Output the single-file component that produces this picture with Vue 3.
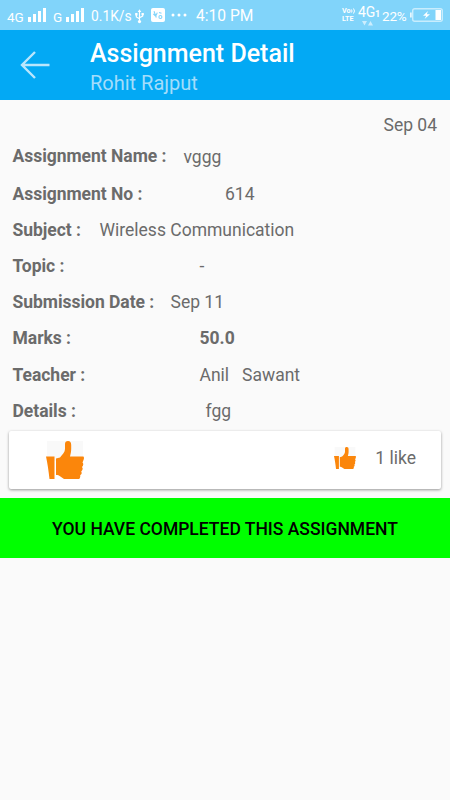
<script setup>
import { ref } from 'vue'

const date = 'Sep 04'

const rows = [
  { key: 'name', label: 'Assignment Name :', value: 'vggg' },
  { key: 'number', label: 'Assignment No :', value: '614' },
  { key: 'subject', label: 'Subject :', value: 'Wireless Communication' },
  { key: 'topic', label: 'Topic :', value: '-' },
  { key: 'due', label: 'Submission Date :', value: 'Sep 11' },
  { key: 'marks', label: 'Marks :', value: '50.0' },
  { key: 'teacher', label: 'Teacher :', value: 'Anil   Sawant' },
  { key: 'notes', label: 'Details :', value: 'fgg' },
]

const cuffPath = 'M0 15.5h8.5V38H3.5C2.6 30 1.5 22 0 15.5z'
const handPath =
  'M10 17.5l4-1c2.5-3 5-5.5 5-8.5V3C19 1 20 0 22 0c2.2 0 3.2 1.5 3.2 4v4c0 3-.7 5-1.2 7.5h13c1.200 0 1.200 2 .5 3.500L36.500 21.500c1.200 1 1 3-.5 4.500 1.200 1.500.8 3-.8 4.500 1 1.500.3 3-1 3.500.3 2-.2 4-1.400 4H18l-4-2.700c-1-.8-2-1.300-4-1.300z'

const likes = ref(1)
</script>

<template>
  <div class="screen">
    <div class="status-bar">
      <span class="network">4G</span>
      <svg class="signal" viewBox="0 0 19 14">
        <path d="M0 9h3v5H0zM5 6h3v8H5zM10 3h3v11h-3zM15 0h3v14h-3z" />
      </svg>
      <span class="network second">G</span>
      <svg class="signal" viewBox="0 0 19 14">
        <path d="M0 9h3v5H0zM5 6h3v8H5zM10 3h3v11h-3zM15 0h3v14h-3z" />
      </svg>
      <span class="speed">0.1K/s</span>
      <svg class="usb" viewBox="0 0 10 16">
        <path d="M5 2v11M1.5 5.5v3L5 10.5M8.5 5v2.5L5 9.5" class="line" />
        <path d="M5 0l2 3H3zM.2 4.2h2.6V7H.2zM7.2 4h2.6v2.6H7.2z" />
        <circle cx="5" cy="13.6" r="1.8" />
      </svg>
      <svg class="app" viewBox="0 0 14 14">
        <rect width="14" height="14" rx="2" />
        <path d="M3 3.2l2.3 6.3M2.3 5.8l2 2M6.3 4.6L5 7.5M8 4.5l2.5.8" class="mark" />
        <circle cx="9.4" cy="9" r="1.5" class="mark" />
      </svg>
      <svg class="more" viewBox="0 0 16 4">
        <circle cx="2" cy="2" r="1.5" />
        <circle cx="8" cy="2" r="1.5" />
        <circle cx="14" cy="2" r="1.5" />
      </svg>
      <span class="clock">4:10 PM</span>

      <div class="status-right">
        <div class="volte">
          <div class="volte-top">
            <span>Vo</span>
            <svg viewBox="0 0 5 6">
              <path d="M.5 1.5q1 1.5 0 3M2.5.5q2 2.5 0 5" />
            </svg>
          </div>
          <span>LTE</span>
        </div>
        <div class="data">
          <span class="data-type">4G<small>1</small></span>
          <svg class="traffic" viewBox="0 0 11 5">
            <path d="M0 0h5L2.5 4.5zM6 4.5h5L8.5 0z" />
          </svg>
        </div>
        <span class="percent">22%</span>
        <svg class="battery" viewBox="0 0 33 14">
          <rect x="2.7" y=".7" width="29.6" height="12.6" rx="2" class="shell" />
          <path d="M.2 4.5h1.4v5H.2zM25.5 2H31v10h-5.5z" />
          <path d="M18 3l-5 4.8h3.2L14.6 11 20 6.3h-3.2z" />
        </svg>
      </div>
    </div>

    <header class="toolbar">
      <button class="back" type="button" aria-label="Back">
        <svg viewBox="0 0 30 28">
          <path d="M29.5 14H2M15 1L2 14l13 13" />
        </svg>
      </button>
      <div class="heading">
        <h1>Assignment Detail</h1>
        <p>Rohit Rajput</p>
      </div>
    </header>

    <main>
      <p class="date">{{ date }}</p>

      <dl class="details">
        <div v-for="row in rows" :key="row.key" class="row" :class="row.key">
          <dt>{{ row.label }}</dt>
          <dd>{{ row.value }}</dd>
        </div>
      </dl>

      <section class="like-card">
        <button class="like-button" type="button" aria-label="Like">
          <svg viewBox="0 0 38 38">
            <path class="plate" d="M1 0h36v20H1z" />
            <path :d="cuffPath" />
            <path :d="handPath" />
          </svg>
        </button>
        <div class="like-count">
          <svg viewBox="0 0 38 38">
            <path class="plate" d="M1 0h36v20H1z" />
            <path :d="cuffPath" />
            <path :d="handPath" />
          </svg>
          <span>{{ likes }} like</span>
        </div>
      </section>

      <div class="banner">YOU HAVE COMPLETED THIS ASSIGNMENT</div>
    </main>
  </div>
</template>

<style>
body {
  background: #fafafa;
}
</style>

<style scoped>
.screen {
  width: 450px;
  min-height: 800px;
  overflow: hidden;
  background: #fafafa;
  color: #6b6b6b;
  font-family: Roboto, 'Liberation Sans', sans-serif;
}

svg {
  display: block;
  flex: none;
}

button {
  border: 0;
  padding: 0;
  background: none;
}

h1,
p,
dl,
dd {
  margin: 0;
}

.status-bar {
  display: flex;
  align-items: center;
  box-sizing: border-box;
  height: 30px;
  padding: 2px 7px 0;
  background: #81d4fa;
  color: #ffffff;
  fill: #ffffff;
  line-height: 20px;
  white-space: nowrap;
}

.network {
  width: 21px;
  padding-top: 1px;
  font-size: 13.5px;
}

.network.second {
  width: 13px;
  margin-left: 6px;
}

.signal {
  width: 19px;
  height: 14px;
  margin-bottom: 2px;
}

.speed {
  width: 44px;
  margin-left: 6px;
  font-size: 13.8px;
}

.usb {
  width: 9px;
  height: 15px;
}

.usb .line {
  fill: none;
  stroke: #ffffff;
  stroke-width: 1.3;
}

.app {
  width: 14px;
  height: 14px;
  margin-bottom: 2px;
  margin-left: 7px;
}

.app .mark {
  fill: none;
  stroke: #81d4fa;
  stroke-width: 1.1;
}

.more {
  width: 16px;
  height: 4px;
  margin-bottom: 2px;
  margin-left: 6px;
}

.clock {
  margin-left: 9px;
  font-size: 15.6px;
}

.status-right {
  display: flex;
  align-items: center;
  margin-left: auto;
}

.volte {
  display: grid;
  width: 16px;
  margin-bottom: 3px;
  font-size: 7.2px;
  font-weight: 700;
  line-height: 8px;
}

.volte-top {
  display: flex;
  align-items: center;
}

.volte-top svg {
  width: 5px;
  height: 6px;
  fill: none;
  stroke: #ffffff;
}

.data {
  display: grid;
  width: 24px;
}

.data-type {
  font-size: 14px;
  letter-spacing: -0.2px;
  line-height: 13px;
}

.data-type small {
  font-size: 9px;
  font-weight: 700;
}

.traffic {
  width: 11px;
  height: 5px;
  margin-left: 4px;
  opacity: 0.6;
}

.percent {
  width: 28px;
  font-size: 13.5px;
  letter-spacing: -0.2px;
}

.battery {
  width: 33px;
  height: 14px;
  margin-bottom: 2px;
}

.battery .shell {
  fill: none;
  stroke: #c9edfd;
  stroke-width: 1.4;
}

.toolbar {
  display: flex;
  box-sizing: border-box;
  height: 70px;
  padding-left: 20px;
  background: #03a9f4;
}

.back {
  width: 70px;
}

.back svg {
  width: 30px;
  height: 28px;
  fill: none;
  stroke: #b9e6fc;
  stroke-width: 2.4;
}

.heading {
  padding-top: 9px;
}

.heading h1 {
  color: #ffffff;
  font-size: 25px;
  font-weight: 500;
  line-height: 29px;
}

.heading p {
  color: #a3ddfb;
  font-size: 20px;
  line-height: 30px;
}

.date {
  padding: 15px 13px 0 0;
  font-size: 17.5px;
  line-height: 21px;
  text-align: right;
}

.details {
  padding: 0 12.5px;
  font-size: 17.5px;
}

.row {
  display: flex;
  align-items: center;
  height: 36.2px;
}

.row dt {
  width: 187px;
  font-weight: 700;
  letter-spacing: -0.03px;
}

.row dd {
  white-space: pre;
}

.row.name {
  height: 39.6px;
}

.row.name dt {
  width: 171px;
}

.row.name dd {
  padding-top: 3px;
}

.row.number dt {
  width: 212.5px;
}

.row.subject dt {
  width: 87px;
}

.row.due dt {
  width: 158px;
}

.row.marks dd {
  font-weight: 700;
}

.row.notes dt {
  width: 193px;
}

.like-card {
  display: flex;
  align-items: center;
  justify-content: space-between;
  box-sizing: border-box;
  height: 58px;
  margin: 2px 9px 9px;
  padding: 0 25px 0 37px;
  border-radius: 2px;
  background: #ffffff;
  box-shadow: 0 1px 3px rgba(0, 0, 0, 0.4);
}

.like-card svg {
  fill: #fb860b;
}

.like-card .plate {
  fill: #f9f9f9;
}

.like-button svg {
  width: 38px;
  height: 38px;
}

.like-count {
  display: flex;
  align-items: center;
  gap: 19px;
  padding-bottom: 4px;
  font-size: 17.5px;
}

.like-count svg {
  width: 22px;
  height: 22px;
}

.banner {
  display: flex;
  align-items: center;
  justify-content: center;
  box-sizing: border-box;
  height: 60px;
  padding-top: 2px;
  background: #00ff00;
  color: #000000;
  font-size: 17.5px;
  font-weight: 500;
}
</style>
